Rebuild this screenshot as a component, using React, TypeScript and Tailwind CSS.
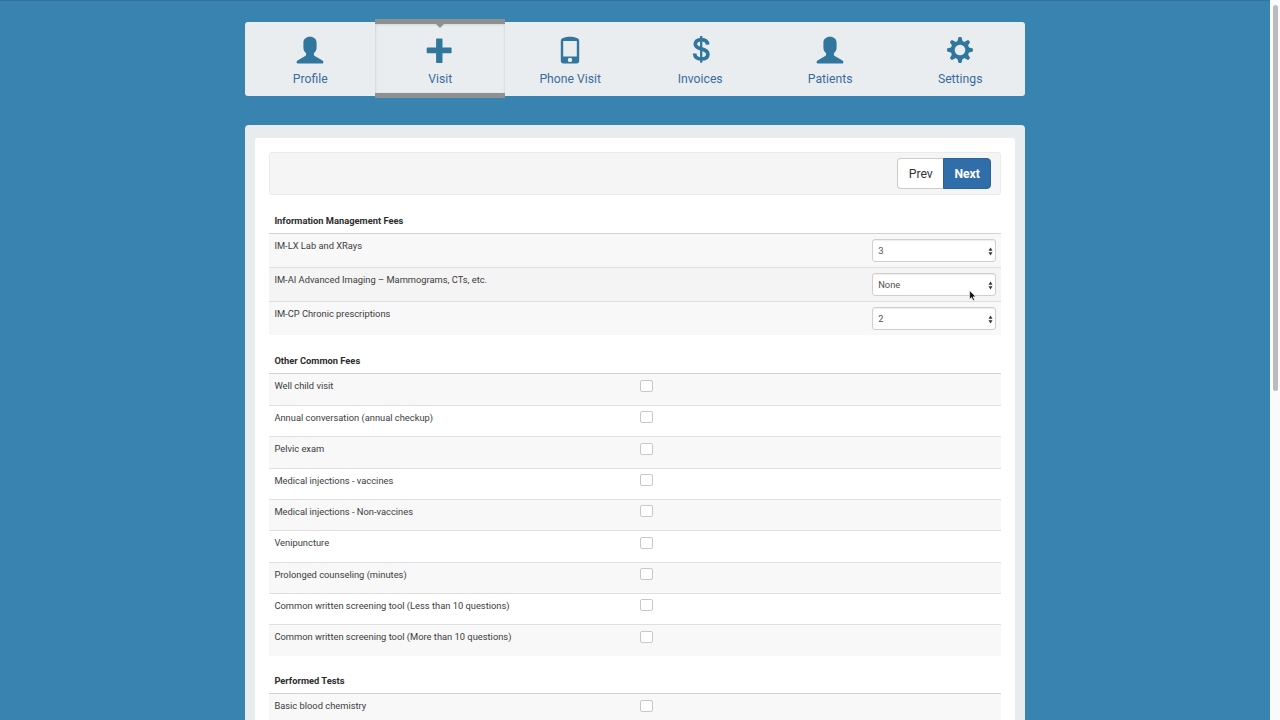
import type { ReactNode } from "react";

const UserIcon = () => (
  <svg viewBox="0 0 28 28" className="h-7 w-7" fill="currentColor">
    <path d="M14 .8c-4 0-6.600 2.300-6.600 6.200v4.500c0 2.400 1 4.400 2.700 5.700v1.200c0 .8-.5 1.400-1.300 1.900l-5.600 3.100C1.400 24.400.6 25 .6 26v.6c0 .5.3.8.8.8h25.200c.5 0 .8-.3.8-.8V26c0-1-.8-1.600-2.600-2.600l-5.600-3.100c-.8-.5-1.300-1.100-1.300-1.900v-1.200c1.700-1.300 2.700-3.300 2.700-5.700V7c0-3.900-2.600-6.200-6.600-6.200z" />
  </svg>
);

const PlusIcon = () => (
  <svg viewBox="0 0 28 28" className="h-7 w-7" fill="currentColor">
    <path d="M10.900 2.500h4.800q.8 0 .8.8v8.200h8.300q.8 0 .8.8v4.200q0 .8-.8.8h-8.300v8.900q0 .8-.8.8h-4.800q-.8 0-.8-.8v-8.900H1.500q-.8 0-.8-.8v-4.200q0-.8.8-.8h8.600V3.300q0-.8.8-.8z" />
  </svg>
);

const PhoneIcon = () => (
  <svg viewBox="0 0 28 28" className="h-7 w-7" fill="currentColor">
    <path
      fillRule="evenodd"
      d="M8 1.700C11 .5 17 .5 20 1.700c2 .5 3.200 1.300 3.200 3v20c0 1.700-1 2.700-2.700 2.700h-13c-1.700 0-2.700-1-2.700-2.700v-20c0-1.700 1.200-2.500 3.200-3zM7.200 5v15.500h13.600V5zM14 21.700a2.200 2.200 0 100 4.400 2.200 2.200 0 000-4.400z"
    />
  </svg>
);

const DollarIcon = () => (
  <svg viewBox="0 0 28 28" className="h-7 w-7" fill="none" stroke="currentColor">
    <path d="M15.200 0v26.700" strokeWidth="2.300" />
    <path
      d="M21.600 8.600C21.400 5.400 19.100 3.600 15.200 3.600c-3.600 0-5.900 1.700-5.900 4.400 0 3 2.300 4 6 4.900 4.300 1.100 6.600 2.300 6.600 5.300 0 3.100-2.500 4.800-6.600 4.800-4.100 0-6.500-1.900-6.700-5.500"
      strokeWidth="3.700"
    />
  </svg>
);

const CogIcon = () => (
  <svg viewBox="0 0 28 28" className="h-7 w-7" fill="currentColor">
    <mask id="hub">
      <rect width="28" height="28" fill="white" />
      <circle cx="14" cy="14" r="5.300" fill="black" />
    </mask>
    <g mask="url(#hub)">
      <circle cx="14" cy="14" r="9.300" />
      {[0, 45, 90, 135, 180, 225, 270, 315].map((angle) => (
        <path
          key={angle}
          transform={`rotate(${angle} 14 14)`}
          d="M11.200 6l1.100-4.200q.2-.7.900-.7h1.600q.7 0 .9.700L16.800 6z"
        />
      ))}
    </g>
  </svg>
);

const NavItem = ({ label, icon, active }: { label: string; icon: ReactNode; active?: boolean }) => (
  <a
    className={`relative flex w-[130px] flex-col items-center text-[#3a6ca0] ${
      active
        ? "-mt-[3px] h-[79px] border-y-[5px] border-[#8e9091] pt-[10px] shadow-[inset_1px_1px_2px_#d5d8da,inset_-1px_0_2px_#dcdfe1]"
        : "h-[74px] pt-3"
    }`}
  >
    {active && (
      <span className="absolute top-0 left-[61px] border-x-[4px] border-t-[4px] border-x-transparent border-t-[#8e9091]" />
    )}
    <span className="flex h-[33px] pt-[2px] text-[#31779d]">{icon}</span>
    <span className="text-[12.200px] leading-6">{label}</span>
  </a>
);

const Heading = ({ children }: { children: ReactNode }) => (
  <h2 className="flex h-[27px] border-b border-[#d2d2d2] pl-[5.200px] text-[9.340px] leading-[27px] font-bold text-[#2c2c2c]">
    {children}
  </h2>
);

const FeeRow = ({ label, value, index }: { label: string; value: string; index: number }) => (
  <div
    className={`flex justify-between pr-[5px] pl-[5.200px] ${
      index > 0 ? "h-[34px] border-t border-[#dedede]" : "h-[33px]"
    } ${index === 1 ? "bg-[#f4f4f4]" : "bg-[#f8f8f8]"}`}
  >
    <span className="pt-[5px] leading-[14px]">{label}</span>
    <div className="mt-[5px] flex h-[23px] w-[124px] items-center justify-between rounded-[3px] border border-[#cfcfcf] bg-white pt-px pr-[2px] pl-[5px] text-[#505050] shadow-[inset_0_1px_1px_#eeeeee]">
      {value}
      <svg viewBox="0 0 5 9" className="h-[9px] w-[5px]" fill="#333">
        <path d="M2.500.500L4.500 3.700H.5zM2.500 8.500L4.500 5.300H.5z" />
      </svg>
    </div>
  </div>
);

const CheckRow = ({ label, index }: { label: string; index: number }) => (
  <div
    className={`flex pl-[5.200px] ${index > 0 ? "h-[31.350px] border-t border-[#dfdfdf]" : "h-[31px]"} ${
      index % 2 === 0 ? "bg-[#f8f8f8]" : "bg-white"
    }`}
  >
    <span className="w-[366px] pt-[5px] leading-[14px]">{label}</span>
    <span
      className={`h-[12px] w-[13px] rounded-[2px] border border-[#c8c8c8] bg-white ${
        index > 0 ? "mt-[5.300px]" : "mt-[6px]"
      }`}
    />
  </div>
);

const imFees = [
  { label: "IM-LX Lab and XRays", value: "3" },
  { label: "IM-AI Advanced Imaging – Mammograms, CTs, etc.", value: "None" },
  { label: "IM-CP Chronic prescriptions", value: "2" },
];

const otherFees = [
  "Well child visit",
  "Annual conversation (annual checkup)",
  "Pelvic exam",
  "Medical injections - vaccines",
  "Medical injections - Non-vaccines",
  "Venipuncture",
  "Prolonged counseling (minutes)",
  "Common written screening tool (Less than 10 questions)",
  "Common written screening tool (More than 10 questions)",
];

const App = () => {
  return (
    <div className="relative flex h-[720px] w-[1280px] overflow-hidden bg-[#3883af] font-[Roboto,sans-serif] shadow-[inset_0_1px_0_#32759c]">
      <div className="flex w-[1270px] flex-col pl-[245.200px]">
        <nav className="mt-[22px] flex h-[74px] w-[780px] rounded-[3px] bg-[#e9edf0]">
          <NavItem label="Profile" icon={<UserIcon />} />
          <NavItem label="Visit" icon={<PlusIcon />} active />
          <NavItem label="Phone Visit" icon={<PhoneIcon />} />
          <NavItem label="Invoices" icon={<DollarIcon />} />
          <NavItem label="Patients" icon={<UserIcon />} />
          <NavItem label="Settings" icon={<CogIcon />} />
        </nav>

        <main className="mt-[29px] h-[595px] w-[780px] rounded-t-[4px] bg-[#e8ecef] px-[10px] pt-[13px]">
          <div className="h-full rounded-t-[3px] bg-white px-[14px] pt-[14px] text-[9.340px] text-[#3c3c3c]">
            <div className="flex h-[43px] items-center justify-end rounded-[3px] border border-[#ebebeb] bg-[#f5f5f5] pr-[9px]">
              <button className="h-[31px] w-[46px] rounded-l-[4px] border border-r-0 border-[#cccccc] bg-white pt-[2px] text-[12.200px] text-[#333]">
                Prev
              </button>
              <button className="h-[31px] w-[48px] rounded-r-[4px] border border-[#2b6299] bg-[#306ea9] pt-[2px] text-[12.200px] font-bold text-white">
                Next
              </button>
            </div>

            <section className="mt-[12px]">
              <Heading>Information Management Fees</Heading>
              {imFees.map((fee, i) => (
                <FeeRow key={fee.label} label={fee.label} value={fee.value} index={i} />
              ))}
            </section>

            <section className="mt-[12px]">
              <Heading>Other Common Fees</Heading>
              {otherFees.map((label, i) => (
                <CheckRow key={label} label={label} index={i} />
              ))}
            </section>

            <section className="mt-[11.200px]">
              <Heading>Performed Tests</Heading>
              <CheckRow label="Basic blood chemistry" index={0} />
            </section>
          </div>
        </main>
      </div>

      <div className="w-[10px] bg-[#fafafa] pt-[5px] pl-[3px]">
        <div className="h-[386px] w-[5px] rounded-full bg-[#bdbabd]" />
      </div>

      {/* mouse pointer */}
      <svg viewBox="0 0 8 12" className="absolute top-[290px] left-[969px] h-[12px] w-[8px]">
        <path d="M.6.600v8.600l2-1.800 1.400 3.200 1.500-.7-1.400-3.100h2.700z" fill="#111" stroke="#fff" strokeWidth=".6" />
      </svg>
    </div>
  );
};

export default App;
